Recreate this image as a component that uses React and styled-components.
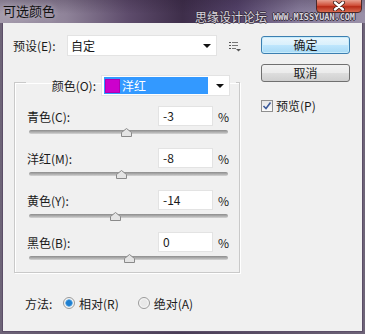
import { createGlobalStyle } from 'styled-components';
import styled from 'styled-components';

const GlobalStyle = createGlobalStyle`
  html, body {
    margin: 0;
    padding: 0;
    background: #f0f0f0;
  }
  body {
    font-family: "Noto Sans CJK SC", "Noto Sans", sans-serif;
    font-size: 12px;
    color: #1a1a1a;
  }
`;

// 슬라이더 값들 (-100 ~ 100)
const channels = [
  { name: '青色(C):', value: -3 },
  { name: '洋红(M):', value: -8 },
  { name: '黄色(Y):', value: -14 },
  { name: '黑色(B):', value: 0 },
];

const TRACK_WIDTH = 199;

const App = () => {
  return (
    <Window>
      <GlobalStyle />
      <TitleBar>
        <TitleText>可选颜色</TitleText>
        <Watermark>
          <span className="cn">思缘设计论坛</span>
          <span className="url">WWW.MISSYUAN.COM</span>
        </Watermark>
        <CloseButton>
          <svg width="14" height="10" viewBox="0 0 14 10">
            <path
              d="M3 1.5 L11 8.5 M11 1.5 L3 8.5"
              stroke="#3a1a14"
              strokeWidth="4"
              strokeLinecap="round"
            />
            <path
              d="M3 1.5 L11 8.5 M11 1.5 L3 8.5"
              stroke="#ffffff"
              strokeWidth="2.4"
              strokeLinecap="round"
            />
          </svg>
        </CloseButton>
      </TitleBar>
      <Body>
        <LeftColumn>
          <PresetRow>
            <Label>预设(E):</Label>
            <Select width={150}>
              <span>自定</span>
              <Arrow />
            </Select>
            <MenuIcon>
              <svg width="12" height="10" viewBox="0 0 12 10">
                <rect x="0" y="0" width="2" height="1" fill="#555" />
                <rect x="3" y="0" width="6" height="1" fill="#777" />
                <rect x="0" y="3" width="2" height="1" fill="#555" />
                <rect x="3" y="3" width="6" height="1" fill="#777" />
                <rect x="0" y="6" width="2" height="1" fill="#555" />
                <rect x="3" y="6" width="4" height="1" fill="#777" />
                <path d="M7 7 L12 7 L9.5 9.5 Z" fill="#555" />
              </svg>
            </MenuIcon>
          </PresetRow>

          <Group>
            <Legend>
              <LegendLabel>颜色(O):</LegendLabel>
              <Select width={129}>
                <Highlight>
                  <Swatch />
                  <span>洋红</span>
                </Highlight>
                <Arrow />
              </Select>
            </Legend>
            {channels.map((c) => (
              <Channel key={c.name}>
                <ValueRow>
                  <ChannelName>{c.name}</ChannelName>
                  <NumberBox>{c.value}</NumberBox>
                  <Percent>%</Percent>
                </ValueRow>
                <Slider>
                  <Track />
                  <Thumb
                    style={{ left: Math.round(((c.value + 100) / 200) * TRACK_WIDTH) - 5 }}
                  >
                    <svg width="11" height="9" viewBox="0 0 11 9">
                      <path
                        d="M0.5 8.5 L0.5 4.5 L5.5 0.5 L10.5 4.5 L10.5 8.5 Z"
                        fill="#e4e4e4"
                        stroke="#8a8a8a"
                      />
                    </svg>
                  </Thumb>
                </Slider>
              </Channel>
            ))}
          </Group>

          <MethodRow>
            <Label>方法:</Label>
            <RadioItem>
              <Radio checked />
              <span>相对(R)</span>
            </RadioItem>
            <RadioItem>
              <Radio />
              <span>绝对(A)</span>
            </RadioItem>
          </MethodRow>
        </LeftColumn>

        <RightColumn>
          <Button className="default">确定</Button>
          <Button>取消</Button>
          <CheckRow>
            <CheckBox>
              <svg width="10" height="10" viewBox="0 0 10 10">
                <path
                  d="M1.5 5 L4 7.5 L8.5 1.5"
                  fill="none"
                  stroke="#3c5a9a"
                  strokeWidth="1.6"
                />
              </svg>
            </CheckBox>
            <span>预览(P)</span>
          </CheckRow>
        </RightColumn>
      </Body>
    </Window>
  );
};

const Window = styled.div`
  width: 365px;
  height: 334px;
  box-sizing: border-box;
  display: flex;
  flex-direction: column;
  padding: 0 2px 2px 2px;
  background: linear-gradient(90deg, #6e6478 0%, #4a3d57 50%, #6e6478 100%);
  overflow: hidden;
`;

const TitleBar = styled.div`
  position: relative;
  height: 23px;
  margin: 0 -2px;
  padding: 0 5px;
  display: flex;
  align-items: center;
  background:
    linear-gradient(180deg, rgba(40, 25, 50, 0.25) 0%, rgba(255, 255, 255, 0) 60%),
    linear-gradient(
      90deg,
      #a49bac 0%,
      #8f8399 18%,
      #5e4c6c 35%,
      #3e2e4a 50%,
      #54436a 65%,
      #8a7f9e 82%,
      #9a90a8 100%
    );
`;

const TitleText = styled.div`
  font-size: 13px;
  color: #111;
  line-height: 22px;
  margin-left: -2px;
  margin-top: -1px;
  text-shadow: 0 0 6px rgba(255, 255, 255, 0.5);
`;

const Watermark = styled.div`
  margin-left: auto;
  margin-right: 5px;
  align-self: flex-end;
  display: flex;
  align-items: flex-end;
  gap: 6px;
  height: 12px;
  color: #d8d4dc;
  .cn {
    font-size: 12px;
    line-height: 12px;
    text-shadow: -1px 0 #3a3040, 1px 0 #3a3040, 0 -1px #3a3040, 0 1px #3a3040;
  }
  .url {
    font-family: "DejaVu Sans Mono", monospace;
    font-size: 8.5px;
    font-weight: bold;
    line-height: 9px;
    padding-bottom: 1px;
    text-shadow: -1px 0 #3a3040, 1px 0 #3a3040, 0 -1px #3a3040, 0 1px #3a3040;
  }
`;

const CloseButton = styled.div`
  position: absolute;
  top: -1px;
  right: 3px;
  width: 46px;
  height: 14px;
  box-sizing: border-box;
  border: 1px solid #4a2a2a;
  border-radius: 0 0 4px 4px;
  background: linear-gradient(180deg, #e8a090 0%, #d0503a 45%, #b82c18 55%, #d86a50 100%);
  display: flex;
  align-items: center;
  justify-content: center;
`;

const Body = styled.div`
  flex: 1;
  display: flex;
  background: #f0f0f0;
  border: 1px solid #5c4e68;
  border-top-width: 0;
`;

const LeftColumn = styled.div`
  width: 248px;
  padding-left: 10px;
  box-sizing: border-box;
  display: flex;
  flex-direction: column;
`;

const PresetRow = styled.div`
  display: flex;
  align-items: center;
  margin-top: 12px;
  height: 21px;
`;

const Label = styled.span`
  width: 54px;
  white-space: nowrap;
`;

const Select = styled.div`
  width: ${(p) => p.width}px;
  height: 21px;
  box-sizing: border-box;
  background: #fff;
  border: 1px solid #e3e3e3;
  display: flex;
  align-items: center;
  padding: 0 4px 0 3px;
  gap: 2px;
  > span {
    flex: 1;
  }
`;

const Arrow = styled.i`
  width: 0;
  height: 0;
  margin-left: auto;
  border-left: 4px solid transparent;
  border-right: 4px solid transparent;
  border-top: 4px solid #111;
  margin-right: 1px;
`;

const MenuIcon = styled.div`
  margin-left: 12px;
  margin-top: 3px;
  display: flex;
`;

const Group = styled.fieldset`
  margin: 13px 0 0 1px;
  padding: 0 3px 9px 3px;
  width: 226px;
  min-width: 0;
  box-sizing: border-box;
  border: 1px solid #c9c9c9;
  box-shadow: inset 1px 1px 0 #fff, 1px 1px 0 #fff;
  display: flex;
  flex-direction: column;
`;

const Legend = styled.legend`
  margin-left: 8px;
  padding: 6px 6px 0 2px;
  display: flex;
  align-items: center;
`;

const LegendLabel = styled.span`
  width: 73px;
  box-sizing: border-box;
  text-align: right;
  padding-right: 5px;
  white-space: nowrap;
`;

const Highlight = styled.div`
  flex: 1;
  height: 17px;
  background: #3399ff;
  color: #fff;
  display: flex;
  align-items: center;
  gap: 2px;
  margin-left: -1px;
  margin-right: 6px;
`;

const Swatch = styled.i`
  width: 15px;
  height: 14px;
  background: #cc00cc;
  border: 1px solid #b000b0;
  box-sizing: border-box;
  margin-left: 1px;
`;

const Channel = styled.div`
  display: flex;
  flex-direction: column;
  padding: 0 7px 0 9px;
  margin-top: 10px;
  & + & {
    margin-top: 11px;
  }
`;

const ValueRow = styled.div`
  display: flex;
  align-items: center;
  height: 20px;
`;

const ChannelName = styled.span`
  flex: 1;
  white-space: nowrap;
`;

const NumberBox = styled.div`
  width: 55px;
  height: 20px;
  box-sizing: border-box;
  background: #fff;
  border: 1px solid #e3e3e3;
  padding-left: 4px;
  line-height: 18px;
`;

const Percent = styled.span`
  width: 16px;
  text-align: right;
`;

const Slider = styled.div`
  position: relative;
  margin-top: 1px;
  margin-left: 2px;
  width: ${TRACK_WIDTH}px;
  height: 10px;
`;

const Track = styled.div`
  position: absolute;
  left: 0;
  right: 0;
  top: 3px;
  height: 4px;
  border-radius: 2px;
  background: linear-gradient(180deg, #8c8c8c 0%, #b4b4b4 60%, #d6d6d6 100%);
`;

const Thumb = styled.div`
  position: absolute;
  top: 1px;
  display: flex;
`;

const MethodRow = styled.div`
  display: flex;
  align-items: center;
  margin-top: 22px;
  padding-left: 12px;
  height: 16px;
  ${Label} {
    width: 38px;
  }
`;

const RadioItem = styled.label`
  display: flex;
  align-items: center;
  gap: 4px;
  margin-right: 19px;
`;

const Radio = styled.i`
  width: 12px;
  height: 12px;
  box-sizing: border-box;
  border-radius: 50%;
  border: 1px solid #9a9a9a;
  background: ${(p) =>
    p.checked
      ? 'radial-gradient(circle, #1e7fd0 0 2.5px, #7ab8e8 3.5px, #f4f4f4 4px)'
      : 'radial-gradient(circle, #e8e8e8 0 3px, #f8f8f8 5px)'};
`;

const RightColumn = styled.div`
  display: flex;
  flex-direction: column;
  padding-left: 10px;
  padding-top: 13px;
`;

const Button = styled.div`
  width: 89px;
  height: 18px;
  box-sizing: border-box;
  margin-bottom: 10px;
  border: 1px solid #707070;
  border-radius: 3px;
  background: linear-gradient(180deg, #f2f2f2 0%, #ebebeb 48%, #dddddd 52%, #cfcfcf 100%);
  display: flex;
  align-items: center;
  justify-content: center;
  line-height: 1;
  &.default {
    border-color: #3c7fb1;
    background: linear-gradient(180deg, #eaf6fd 0%, #d9f0fc 48%, #bee6fd 52%, #a7d9f5 100%);
    box-shadow: inset 0 0 0 1px #c8ecfb;
  }
`;

const CheckRow = styled.label`
  display: flex;
  align-items: center;
  gap: 3px;
  margin-top: 5px;
`;

const CheckBox = styled.i`
  width: 12px;
  height: 12px;
  box-sizing: border-box;
  border: 1px solid #8f8f8f;
  background: linear-gradient(180deg, #e6e6e6, #fbfbfb);
  display: flex;
  align-items: center;
  justify-content: center;
`;

export default App;
